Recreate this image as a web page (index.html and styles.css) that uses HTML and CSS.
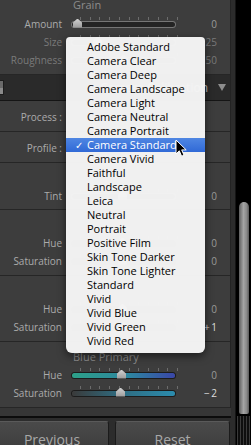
FILE: index.html
```html
<!DOCTYPE html>
<html lang="en">
<head>
  <meta charset="UTF-8">
  <meta name="viewport" content="width=device-width, initial-scale=1.0">
  <title>Camera Calibration</title>
  <link rel="stylesheet" href="styles.css">
</head>
<body>
  <div class="main">
    <div class="panel">
      <div class="box grain">
        <div class="sub-head">Grain</div>
        <div class="row">
          <span class="label">Amount</span>
          <div class="slider"><i class="thumb" style="left: 1px"></i></div>
          <span class="value">0</span>
        </div>
        <div class="row dim">
          <span class="label">Size</span>
          <div class="slider"><i class="thumb" style="left: 21px"></i></div>
          <span class="value">25</span>
        </div>
        <div class="row dim">
          <span class="label">Roughness</span>
          <div class="slider"><i class="thumb" style="left: 47px"></i></div>
          <span class="value">50</span>
        </div>
      </div>

      <div class="panel-head">
        <span class="toggle"></span>
        <span class="title">Camera Calibration</span>
        <span class="arrow"></span>
      </div>

      <div class="box single">
        <div class="row">
          <span class="label">Process :</span>
          <span class="popup"></span>
        </div>
      </div>
      <div class="box single">
        <div class="row">
          <span class="label">Profile :</span>
          <span class="popup"></span>
        </div>
      </div>

      <div class="box shadows">
        <div class="sub-head"></div>
        <div class="row">
          <span class="label">Tint</span>
          <div class="slider tint"><i class="thumb" style="left: 46px"></i></div>
          <span class="value">0</span>
        </div>
      </div>

      <div class="box primary">
        <div class="sub-head"></div>
        <div class="row">
          <span class="label">Hue</span>
          <div class="slider red-hue"><i class="thumb" style="left: 46px"></i></div>
          <span class="value">0</span>
        </div>
        <div class="row">
          <span class="label">Saturation</span>
          <div class="slider red-sat"><i class="thumb" style="left: 46px"></i></div>
          <span class="value">0</span>
        </div>
      </div>

      <div class="box primary">
        <div class="sub-head"></div>
        <div class="row">
          <span class="label">Hue</span>
          <div class="slider green-hue"><i class="thumb" style="left: 46px"></i></div>
          <span class="value">0</span>
        </div>
        <div class="row">
          <span class="label">Saturation</span>
          <div class="slider green-sat"><i class="thumb" style="left: 47px"></i></div>
          <span class="value on">+&#8201;1</span>
        </div>
      </div>

      <div class="box primary">
        <div class="sub-head">Blue Primary</div>
        <div class="row">
          <span class="label">Hue</span>
          <div class="slider blue-hue"><i class="thumb" style="left: 45px"></i></div>
          <span class="value">0</span>
        </div>
        <div class="row">
          <span class="label">Saturation</span>
          <div class="slider blue-sat"><i class="thumb" style="left: 44px"></i></div>
          <span class="value on">&minus;&#8201;2</span>
        </div>
      </div>
    </div>

    <div class="footer">
      <button class="btn prev">Previous</button>
      <button class="btn reset">Reset</button>
    </div>
  </div>

  <div class="gutter"></div>
  <div class="scroll">
    <div class="scroll-thumb"></div>
    <div class="scroll-ribs"></div>
  </div>

  <!-- open profile popup -->
  <ul class="menu">
    <li>Adobe Standard</li>
    <li>Camera Clear</li>
    <li>Camera Deep</li>
    <li>Camera Landscape</li>
    <li>Camera Light</li>
    <li>Camera Neutral</li>
    <li>Camera Portrait</li>
    <li class="checked"><span class="check">&#10003;</span>Camera Standard</li>
    <li>Camera Vivid</li>
    <li>Faithful</li>
    <li>Landscape</li>
    <li>Leica</li>
    <li>Neutral</li>
    <li>Portrait</li>
    <li>Positive Film</li>
    <li>Skin Tone Darker</li>
    <li>Skin Tone Lighter</li>
    <li>Standard</li>
    <li>Vivid</li>
    <li>Vivid Blue</li>
    <li>Vivid Green</li>
    <li>Vivid Red</li>
  </ul>

  <svg class="cursor" width="13" height="19" viewBox="0 0 13 19">
    <path d="M1 1 L1 15 L4.3 11.8 L6.6 17.2 L9 16.2 L6.7 10.9 L11.2 10.9 Z" fill="#000" stroke="#fff" stroke-width="1" stroke-linejoin="round"/>
  </svg>
</body>
</html>
```

FILE: styles.css
```css
* {
  box-sizing: border-box;
}

body {
  margin: 0;
  width: 251px;
  height: 445px;
  overflow: hidden;
  position: relative;
  display: flex;
  background: #000;
  font-family: "Open Sans", "Liberation Sans", sans-serif;
}

/* left column: panel + buttons */
.main {
  width: 231px;
  display: flex;
  flex-direction: column;
}

.panel {
  margin-top: -4px;
  background: #3d3d3d;
  border-right: 1px solid #232323;
}

.box {
  border-bottom: 1px solid #262626;
}

.grain {
  padding-bottom: 5px;
}

.grain .sub-head {
  height: 19px;
  line-height: 17px;
}

.single {
  padding: 7px 0 5px;
}

.shadows {
  padding: 6px 0 4px;
}

.primary {
  padding: 6px 0 5px;
}

.sub-head {
  height: 18px;
  line-height: 18px;
  padding-left: 73px;
  font-size: 11px;
  color: #8c8c8c;
}

.row {
  display: grid;
  grid-template-columns: 62px 103px 1fr;
  column-gap: 10px;
  align-items: center;
  height: 18px;
  padding-right: 13px;
}

.label {
  text-align: right;
  font-size: 10px;
  color: #ababab;
  white-space: nowrap;
}

.value {
  text-align: right;
  font-size: 10px;
  color: #9a9a9a;
}

.value.on {
  color: #dedede;
}

.dim .label,
.dim .value {
  color: #7a7a7a;
}

/* sliders */
.slider {
  position: relative;
  height: 5px;
  border-radius: 3px;
  background: #242424;
  box-shadow: 0 0 0 1px #767676;
}

.slider::before {
  content: "";
  position: absolute;
  left: 8px;
  width: 98px;
  top: -5px;
  height: 3px;
  background: repeating-linear-gradient(to right, #6c6c6c 0 1px, transparent 1px 9.7px);
}

.red-hue, .red-sat, .green-hue, .green-sat, .blue-hue, .blue-sat {
  box-shadow: 0 0 0 1px #1c1c1c;
}

.blue-hue {
  background: linear-gradient(to right, #2ca088, #2d86a0 55%, #3a46a8);
}

.blue-sat {
  background: linear-gradient(to right, #3a3a3a, #2f6a7e 45%, #2b8cae);
}

.thumb {
  position: absolute;
  top: -3px;
  width: 9px;
  height: 9px;
  background: linear-gradient(#d0d0d0, #9a9a9a);
  clip-path: polygon(50% 0, 100% 45%, 100% 100%, 0 100%, 0 45%);
}

/* collapsed panel header */
.panel-head {
  display: flex;
  align-items: center;
  height: 26px;
  background: #2a2a2a;
  border-bottom: 1px solid #151515;
  padding-right: 4px;
}

.toggle {
  width: 4px;
  height: 15px;
  background: linear-gradient(#6a6a6a 50%, #8a8a8a 50%);
  border: 1px solid #1d1d1d;
  border-left: none;
}

.title {
  margin-left: auto;
  font-size: 12px;
  color: #c2c2c2;
  margin-right: 10px;
}

.arrow {
  width: 0;
  height: 0;
  border-left: 4px solid transparent;
  border-right: 4px solid transparent;
  border-top: 7px solid #8e8e8e;
}

/* buttons */
.footer {
  flex: 1;
  display: flex;
  gap: 6px;
  background: #2c2c2c;
  border-top: 8px solid #363636;
  box-shadow: inset 0 2px 0 #0c0c0c;
  padding-top: 5px;
}

.btn {
  font-family: "Open Sans", "Liberation Sans", sans-serif;
  font-size: 14px;
  line-height: 19px;
  color: #a8a8a8;
  background: linear-gradient(#4a4a4a, #3b3b3b);
  border: 1px solid #1b1b1b;
  border-top-color: #5a5a5a;
  border-radius: 3px 3px 0 0;
  padding: 8px 0 6px;
  text-align: center;
}

.prev {
  width: 114px;
  margin-left: -5px;
}

.reset {
  width: 115px;
}

/* scroll column */
.gutter {
  width: 5px;
  background: #2c2c2c;
  border-right: 1px solid #151515;
}

.scroll {
  width: 15px;
  display: flex;
  flex-direction: column;
  align-items: center;
  padding-top: 202px;
}

.scroll-thumb {
  width: 10px;
  height: 212px;
  border-radius: 5px 5px 2px 2px;
  background: linear-gradient(to right, #5e5e5e, #a4a4a4 45%, #8a8a8a 75%, #5a5a5a);
}

.scroll-ribs {
  margin-top: 2px;
  width: 13px;
  flex: 1;
  background: repeating-linear-gradient(to right, #3a3a3a 0 1px, #0e0e0e 1px 3px);
}

/* popup menu */
.menu {
  position: absolute;
  left: 66px;
  top: 37px;
  width: 139px;
  margin: 0;
  padding: 3px 0 5px;
  list-style: none;
  background: rgba(244, 244, 244, 0.98);
  border-radius: 4px 4px 6px 6px;
  box-shadow: 0 3px 8px rgba(0, 0, 0, 0.55);
  font-size: 11px;
  color: #000;
}

.menu li {
  height: 14px;
  line-height: 14px;
  padding-left: 21px;
  white-space: nowrap;
}

.menu .checked {
  padding-left: 9px;
  color: #fff;
  background: linear-gradient(#4f86e2, #3069d6);
}

.check {
  display: inline-block;
  width: 12px;
  font-family: "DejaVu Sans", sans-serif;
  font-size: 10px;
}

.cursor {
  position: absolute;
  left: 175px;
  top: 139px;
}
```
